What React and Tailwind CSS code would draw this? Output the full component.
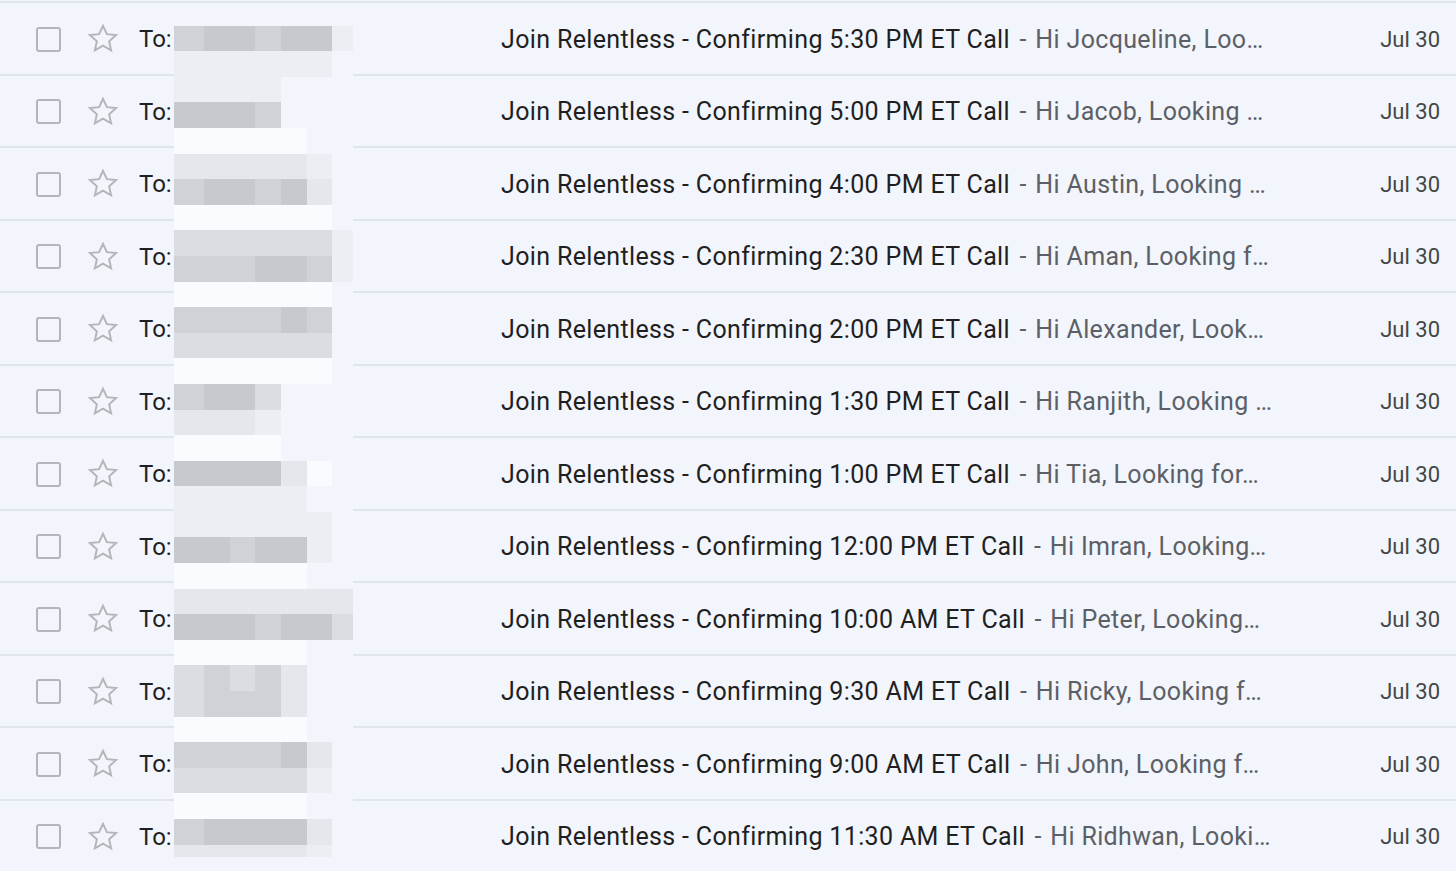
import React from 'react';

const emails = [
    { time: '5:30 PM', snippet: 'Hi Jocqueline, Loo…' },
    { time: '5:00 PM', snippet: 'Hi Jacob, Looking …' },
    { time: '4:00 PM', snippet: 'Hi Austin, Looking …' },
    { time: '2:30 PM', snippet: 'Hi Aman, Looking f…' },
    { time: '2:00 PM', snippet: 'Hi Alexander, Look…' },
    { time: '1:30 PM', snippet: 'Hi Ranjith, Looking …' },
    { time: '1:00 PM', snippet: 'Hi Tia, Looking for…' },
    { time: '12:00 PM', snippet: 'Hi Imran, Looking…' },
    { time: '10:00 AM', snippet: 'Hi Peter, Looking…' },
    { time: '9:30 AM', snippet: 'Hi Ricky, Looking f…' },
    { time: '9:00 AM', snippet: 'Hi John, Looking f…' },
    { time: '11:30 AM', snippet: 'Hi Ridhwan, Looki…' },
];

// pixelated redaction over the recipient column, one string per mosaic row
const mosaic = [
    'TTTTTTT', 'MDDMDDW', 'WWWWWWB', 'WWWWBBB', 'DDDMBBB', 'XXXXXBB', 'EEEEEWB',
    'MDDMDEB', 'XXXXXXB', 'LLLLLLW', 'MMMDDMW', 'XXXXXXB', 'MMMMDMB', 'LLLLLLB',
    'XXXXXXB', 'MDDLBBB', 'EEEWBBB', 'XXXXBBB', 'DDDDEXB', 'WWWWWBB', 'WWWWWWB',
    'DDMDDWB', 'XXXXXBB', 'EEEEEEE', 'DDDMDDL', 'XXXXXBB', 'LMLMEBB', 'LMMMEBB',
    'XXXXXBB', 'MMMMDEB', 'LLLLLWB', 'XXXXXBB', 'MDDDDEB', 'EEEEEWB',
];

const shade = {
    T: 'bg-transparent',
    D: 'bg-[#c7c9ce]',
    M: 'bg-[#d0d2d7]',
    L: 'bg-[#dbdde2]',
    E: 'bg-[#e5e7ec]',
    W: 'bg-[#eceef4]',
    X: 'bg-[#f9fbfe]',
    B: 'bg-[#f2f5fb]',
};

const Checkbox = () => (
    <div className="w-[25px] h-[25px] border-[2.5px] border-[#b3b5b9] rounded-[3px]" />
);

const Star = () => (
    <svg width="36" height="36" viewBox="0 0 24 24" className="text-[#b3b5b9]">
        <path
            d="M12 3.2l2.6 5.6 6.1.6-4.6 4.1 1.3 6-5.4-3.1-5.4 3.1 1.3-6-4.6-4.1 6.1-.6z"
            fill="none"
            stroke="currentColor"
            strokeWidth="1.3"
            strokeLinejoin="miter"
        />
    </svg>
);

const Row = ({ email }) => (
    <div className="flex items-center h-[72.5px] pt-[2px] border-t-2 border-[#e0e4ec]">
        <div className="ml-[36px] flex items-center">
            <Checkbox />
        </div>
        <div className="ml-[24px] flex items-center">
            <Star />
        </div>
        <div className="ml-[18px] w-[362px] text-[24px] text-[#1f1f1f]">To:</div>
        <div className="w-[800px] whitespace-nowrap overflow-hidden text-[25px] tracking-[0.35px]">
            <span className="text-[#1f1f1f]">Join Relentless - Confirming {email.time} ET Call</span>
            <span className="text-[#5c6066] pl-[3px]"> - </span>
            <span className="text-[#5c6066] pl-[2px]">{email.snippet}</span>
        </div>
        <div className="ml-auto pr-[16px] text-[22px] text-[#444746]">Jul 30</div>
    </div>
);

const App = () => {
    return (
        <div
            className="relative w-full h-[871px] overflow-hidden bg-[#f2f5fb] pt-[1px]"
            style={{ fontFamily: 'Roboto, "Noto Sans", sans-serif' }}
        >
            {emails.map((email, i) => (
                <Row key={i} email={email} />
            ))}

            <div className="absolute left-[174px] top-0 w-[179px]">
                {mosaic.map((row, r) => (
                    <div
                        key={r}
                        className={r === mosaic.length - 1
                            ? 'grid grid-cols-[30px_26px_25px_26px_26px_25px_21px] h-[12px]'
                            : 'grid grid-cols-[30px_26px_25px_26px_26px_25px_21px] h-[25.6px]'}
                    >
                        {row.split('').map((c, k) => (
                            <div key={k} className={shade[c]} />
                        ))}
                    </div>
                ))}
            </div>
        </div>
    );
};

export default App;
